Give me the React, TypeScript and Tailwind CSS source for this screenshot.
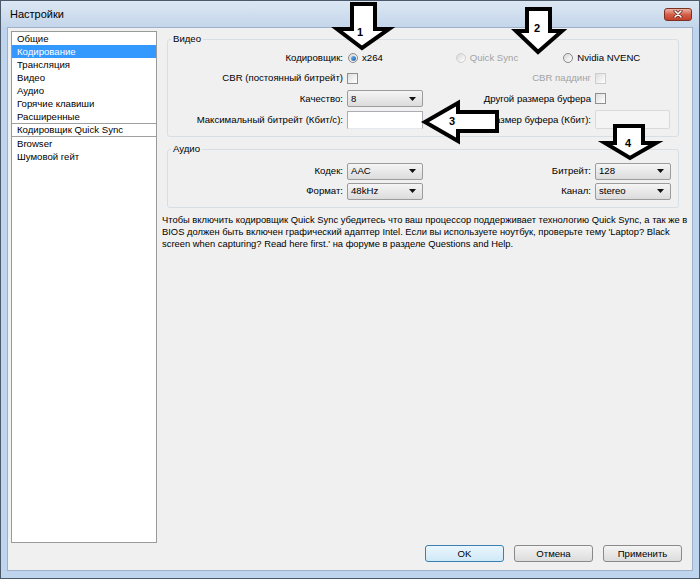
import React from 'react';

const sidebarItems = [
  'Общие',
  'Кодирование',
  'Трансляция',
  'Видео',
  'Аудио',
  'Горячие клавиши',
  'Расширенные',
];

const Radio = ({ label, checked, disabled }: { label: string; checked?: boolean; disabled?: boolean }) => (
  <div className={`flex w-[108px] items-center gap-[4px] ${disabled ? 'text-[#a3a3a3]' : 'text-black'}`}>
    <span
      className={`flex h-[10px] w-[10px] items-center justify-center rounded-full border bg-gradient-to-br from-[#d8d8d8] to-white ${
        disabled ? 'border-[#cfcfcf]' : 'border-[#8a8a8a]'
      }`}
    >
      {checked && <span className="h-[5px] w-[5px] rounded-full bg-gradient-to-br from-[#6fb6f0] to-[#1f5fa8]" />}
    </span>
    <span>{label}</span>
  </div>
);

const Check = ({ disabled }: { disabled?: boolean }) => (
  <span
    className={`block h-[11px] w-[11px] border bg-gradient-to-br from-[#dedede] to-white ${
      disabled ? 'border-[#cdcdcd]' : 'border-[#8e8f8f]'
    }`}
  />
);

const Combo = ({ value }: { value: string }) => (
  <div className="flex h-[17px] w-[76px] items-center justify-between rounded-[2px] border border-[#9c9c9c] bg-gradient-to-b from-[#f5f5f5] to-[#dcdcdc] pl-[3px] pr-[6px]">
    <span>{value}</span>
    <svg width="7" height="4" viewBox="0 0 7 4">
      <path d="M0 0h7L3.5 4z" fill="#111" />
    </svg>
  </div>
);

const Button = ({ label, focused }: { label: string; focused?: boolean }) => (
  <button
    className={`h-[17px] w-[79px] rounded-[3px] border ${
      focused
        ? 'border-[#3c7fb1] bg-gradient-to-b from-[#eaf6fd] to-[#d0e9f8]'
        : 'border-[#8a8a8a] bg-gradient-to-b from-[#f4f4f4] to-[#dcdcdc]'
    }`}
  >
    {label}
  </button>
);

export default function App() {
  return (
    <div className="relative flex h-[579px] w-[700px] flex-col border border-[#4b5a6b] bg-[#bfd4ed] font-['Liberation_Sans',Arial,sans-serif] text-[9.6px] leading-[12px] text-black">
      {/* title bar */}
      <div className="flex h-[26px] items-center justify-between bg-gradient-to-b from-[#dce7f3] to-[#c4d6eb] pl-[9px] pr-[7px]">
        <span className="text-[11px]">Настройки</span>
        <div className="flex h-[13px] w-[28px] items-center justify-center rounded-[3px] border border-[#7d3022] bg-gradient-to-b from-[#eab2a5] via-[#d4604a] to-[#c2402a]">
          <svg width="10" height="8" viewBox="0 0 10 8">
            <path d="M2 1l6 6M8 1L2 7" stroke="#5a1a10" strokeWidth="3" strokeLinecap="round" />
            <path d="M2 1l6 6M8 1L2 7" stroke="#fff" strokeWidth="1.6" strokeLinecap="round" />
          </svg>
        </div>
      </div>

      {/* body */}
      <div className="mx-[6px] mb-[7px] flex flex-1 flex-col border border-[#9db2ca] bg-[#f0f0f0]">
        <div className="flex pl-[3px] pt-[3px]">
          {/* sidebar */}
          <div className="h-[512px] w-[146px] shrink-0 border border-[#9a9a9a] bg-white">
            {sidebarItems.map((item) => (
              <div
                key={item}
                className={`flex h-[13px] items-center pl-[5px] ${item === 'Кодирование' ? 'bg-[#3399ff] text-white' : ''}`}
              >
                {item}
              </div>
            ))}
            <div className="flex h-[14px] items-center border-y border-[#a0a0a0] pl-[5px]">Кодировщик Quick Sync</div>
            <div className="flex h-[13px] items-center pl-[5px]">Browser</div>
            <div className="flex h-[13px] items-center pl-[5px]">Шумовой гейт</div>
          </div>

          {/* settings */}
          <div className="ml-[5px] flex w-[530px] shrink-0 flex-col pt-[2px]">
            <fieldset className="ml-[5px] w-[512px] rounded-[3px] border border-[#d5dfe5] pb-[6px] pt-[3px]">
              <legend className="ml-[3px] px-[2px]">Видео</legend>
              <div className="grid grid-cols-[175px_76px_164px_76px] gap-x-[4px]">
                <div className="flex h-[20px] items-center justify-end">Кодировщик:</div>
                <div className="col-span-3 flex h-[20px] items-center pl-[1px]">
                  <Radio label="x264" checked />
                  <Radio label="Quick Sync" disabled />
                  <Radio label="Nvidia NVENC" />
                </div>

                <div className="flex h-[20px] items-center justify-end">CBR (постоянный битрейт)</div>
                <div className="flex h-[20px] items-center">
                  <Check />
                </div>
                <div className="flex h-[20px] items-center justify-end text-[#a3a3a3]">CBR паддинг</div>
                <div className="flex h-[20px] items-center">
                  <Check disabled />
                </div>

                <div className="flex h-[21px] items-center justify-end">Качество:</div>
                <div className="flex h-[21px] items-center">
                  <Combo value="8" />
                </div>
                <div className="flex h-[21px] items-center justify-end">Другой размера буфера</div>
                <div className="flex h-[21px] items-center">
                  <Check />
                </div>

                <div className="flex h-[21px] items-center justify-end">Максимальный битрейт (Кбит/с):</div>
                <div className="flex h-[21px] items-center">
                  <div className="h-[18px] w-[76px] border border-[#abadb3] border-b-[#e3e9ef] bg-white" />
                </div>
                <div className="flex h-[21px] items-center justify-end">Размер буфера (Кбит):</div>
                <div className="flex h-[21px] items-center">
                  <div className="h-[19px] w-[75px] rounded-[2px] border border-[#d9d9d9] bg-[#f4f4f4]" />
                </div>
              </div>
            </fieldset>

            <fieldset className="ml-[5px] mt-[6px] w-[512px] rounded-[3px] border border-[#d5dfe5] pb-[6px] pt-[6px]">
              <legend className="ml-[3px] px-[2px]">Аудио</legend>
              <div className="grid grid-cols-[175px_76px_164px_76px] gap-x-[4px]">
                <div className="flex h-[20px] items-center justify-end">Кодек:</div>
                <div className="flex h-[20px] items-center">
                  <Combo value="AAC" />
                </div>
                <div className="flex h-[20px] items-center justify-end">Битрейт:</div>
                <div className="flex h-[20px] items-center">
                  <Combo value="128" />
                </div>

                <div className="flex h-[20px] items-center justify-end">Формат:</div>
                <div className="flex h-[20px] items-center">
                  <Combo value="48kHz" />
                </div>
                <div className="flex h-[20px] items-center justify-end">Канал:</div>
                <div className="flex h-[20px] items-center">
                  <Combo value="stereo" />
                </div>
              </div>
            </fieldset>

            <p className="mt-[6px] whitespace-nowrap text-[9.4px]">
              Чтобы включить кодировщик Quick Sync убедитесь что ваш процессор поддерживает технологию Quick Sync, а так же в
              <br />
              BIOS должен быть включен графический адаптер Intel. Если вы используете ноутбук, проверьте тему 'Laptop? Black
              <br />
              screen when capturing? Read here first.' на форуме в разделе Questions and Help.
            </p>
          </div>
        </div>

        {/* dialog buttons */}
        <div className="mt-[2px] flex justify-end gap-[10px] pr-[10px]">
          <Button label="OK" focused />
          <Button label="Отмена" />
          <Button label="Применить" />
        </div>
      </div>

      {/* hand-drawn annotation arrows */}
      <svg className="pointer-events-none absolute left-[-1px] top-[-1px]" width="700" height="579" viewBox="0 0 700 579">
        <g fill="#fff" stroke="#000" strokeWidth="4" strokeLinejoin="miter">
          <path d="M352 4H375V29H389L362 48L337 29H352Z" />
          <path d="M527 9H550V31H562L538 52L516 31H527Z" />
          <path d="M425 122L458 103V112H497V131H458V141Z" />
          <path d="M615 126H643V143H656L630 158L605 143H615Z" />
        </g>
        <g fontFamily="Liberation Sans, Arial, sans-serif" fontWeight="bold" fontSize="11" fill="#000">
          <text x="357" y="36">1</text>
          <text x="534" y="32">2</text>
          <text x="449" y="125">3</text>
          <text x="625" y="147">4</text>
        </g>
      </svg>
    </div>
  );
}
